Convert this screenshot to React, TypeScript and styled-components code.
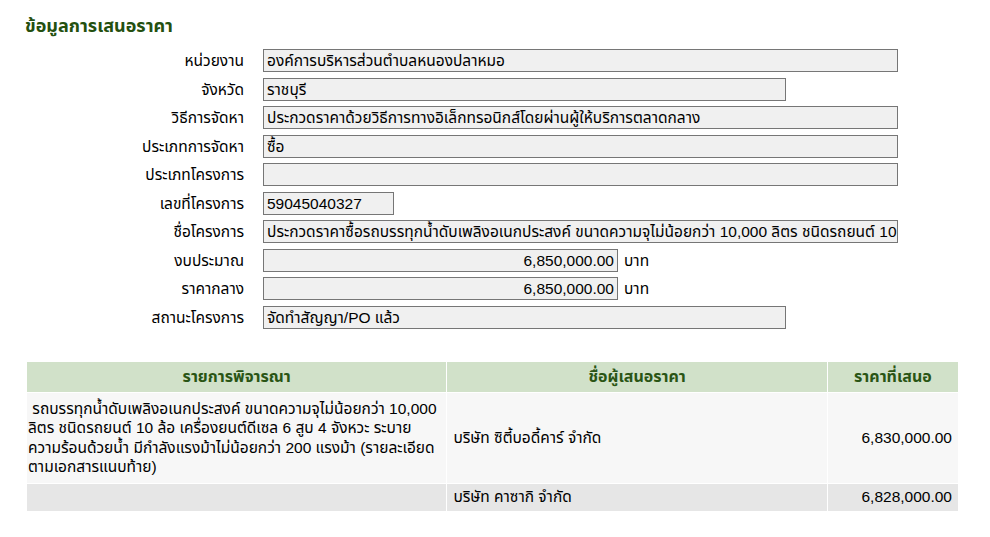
import React from 'react'
import styled, { createGlobalStyle } from 'styled-components'

const GlobalStyle = createGlobalStyle`
    body {
        margin: 0;
        background: #ffffff;
        font-family: "Liberation Sans", Tahoma, "Noto Sans Thai", sans-serif;
        font-size: 15.5px;
        color: #000000;
    }
`

type Field = {
    label: string
    value: string
    size: 'full' | 'medium' | 'short' | 'money'
    unit?: string
}

const fields: Field[] = [
    { label: 'หน่วยงาน', value: 'องค์การบริหารส่วนตำบลหนองปลาหมอ', size: 'full' },
    { label: 'จังหวัด', value: 'ราชบุรี', size: 'medium' },
    { label: 'วิธีการจัดหา', value: 'ประกวดราคาด้วยวิธีการทางอิเล็กทรอนิกส์โดยผ่านผู้ให้บริการตลาดกลาง', size: 'full' },
    { label: 'ประเภทการจัดหา', value: 'ซื้อ', size: 'full' },
    { label: 'ประเภทโครงการ', value: '', size: 'full' },
    { label: 'เลขที่โครงการ', value: '59045040327', size: 'short' },
    {
        label: 'ชื่อโครงการ',
        value: 'ประกวดราคาซื้อรถบรรทุกน้ำดับเพลิงอเนกประสงค์ ขนาดความจุไม่น้อยกว่า 10,000 ลิตร ชนิดรถยนต์ 10 ล้อ',
        size: 'full',
    },
    { label: 'งบประมาณ', value: '6,850,000.00', size: 'money', unit: 'บาท' },
    { label: 'ราคากลาง', value: '6,850,000.00', size: 'money', unit: 'บาท' },
    { label: 'สถานะโครงการ', value: 'จัดทำสัญญา/PO แล้ว', size: 'medium' },
]

const widths = { full: 635, medium: 523, short: 131, money: 355 }

// line breaks follow the original word wrapping of the description
const bids = [
    {
        item:
            ' รถบรรทุกน้ำดับเพลิงอเนกประสงค์ ขนาดความจุไม่น้อยกว่า 10,000 ลิตร ชนิดรถยนต์ 10 ล้อ เครื่องยนต์ดีเซล 6 สูบ 4 จังหวะ ระบาย\n' +
            'ความร้อนด้วยน้ำ มีกำลังแรงม้าไม่น้อยกว่า 200 แรงม้า (รายละเอียด\nตามเอกสารแนบท้าย)',
        bidder: 'บริษัท ซิตี้บอดี้คาร์ จำกัด',
        price: '6,830,000.00',
    },
    { item: '', bidder: 'บริษัท คาซากิ จำกัด', price: '6,828,000.00' },
]

function App() {
    return (
        <Page>
            <GlobalStyle />
            <Title>ข้อมูลการเสนอราคา</Title>
            <FormGrid>
                {fields.map((f) => (
                    <React.Fragment key={f.label}>
                        <Label>{f.label}</Label>
                        <FieldCell>
                            <Box $width={widths[f.size]} $right={f.size === 'money'}>
                                {f.value}
                            </Box>
                            {f.unit && <Unit>{f.unit}</Unit>}
                        </FieldCell>
                    </React.Fragment>
                ))}
            </FormGrid>
            <BidTable>
                <colgroup>
                    <col style={{ width: 420 }} />
                    <col style={{ width: 380 }} />
                    <col style={{ width: 131 }} />
                </colgroup>
                <thead>
                    <tr>
                        <Th>รายการพิจารณา</Th>
                        <Th>ชื่อผู้เสนอราคา</Th>
                        <Th>ราคาที่เสนอ</Th>
                    </tr>
                </thead>
                <tbody>
                    {bids.map((b, i) => (
                        <BidRow key={b.bidder} $alt={i % 2 === 1}>
                            <ItemCell>{b.item}</ItemCell>
                            <Td>{b.bidder}</Td>
                            <PriceCell>{b.price}</PriceCell>
                        </BidRow>
                    ))}
                </tbody>
            </BidTable>
        </Page>
    )
}

export default App

const Page = styled.div`
    width: 990px;
    padding: 16px 0 24px 26px;
    box-sizing: border-box;
`

const Title = styled.h2`
    margin: 0 0 13px -1px;
    font-size: 18px;
    font-weight: bold;
    color: #24500f;
    line-height: 20px;
`

const FormGrid = styled.div`
    display: grid;
    grid-template-columns: 218px 1fr;
    column-gap: 19px;
    row-gap: 5.5px;
    align-items: center;
`

const Label = styled.div`
    text-align: right;
    line-height: 23px;
    white-space: nowrap;
`

const FieldCell = styled.div`
    display: flex;
    align-items: center;
    gap: 6px;
`

const Box = styled.div<{ $width: number; $right?: boolean }>`
    width: ${(p) => p.$width}px;
    height: 23px;
    box-sizing: border-box;
    border: 1px solid #767676;
    background: #f0f0f0;
    padding: 0 3px;
    line-height: 21px;
    white-space: nowrap;
    overflow: hidden;
    text-align: ${(p) => (p.$right ? 'right' : 'left')};
`

const Unit = styled.span`
    line-height: 23px;
`

const BidTable = styled.table`
    margin-top: 33px;
    width: 933px;
    border-collapse: collapse;
    table-layout: fixed;
`

const Th = styled.th`
    height: 30px;
    padding: 0 6px;
    background: #d1e1c9;
    color: #2a5515;
    font-weight: bold;
    font-size: 16px;
    text-align: center;
    border: 1px solid #ffffff;
    border-top: none;
`

const BidRow = styled.tr<{ $alt?: boolean }>`
    background: ${(p) => (p.$alt ? '#e6e6e6' : '#f7f7f7')};
`

const Td = styled.td`
    padding: 0 6px;
    height: 27px;
    line-height: 19.5px;
    border: 1px solid #ffffff;
    vertical-align: middle;
`

const ItemCell = styled(Td)`
    height: auto;
    padding: 6px 0 6px 1px;
    white-space: pre-wrap;
`

const PriceCell = styled(Td)`
    text-align: right;
`
